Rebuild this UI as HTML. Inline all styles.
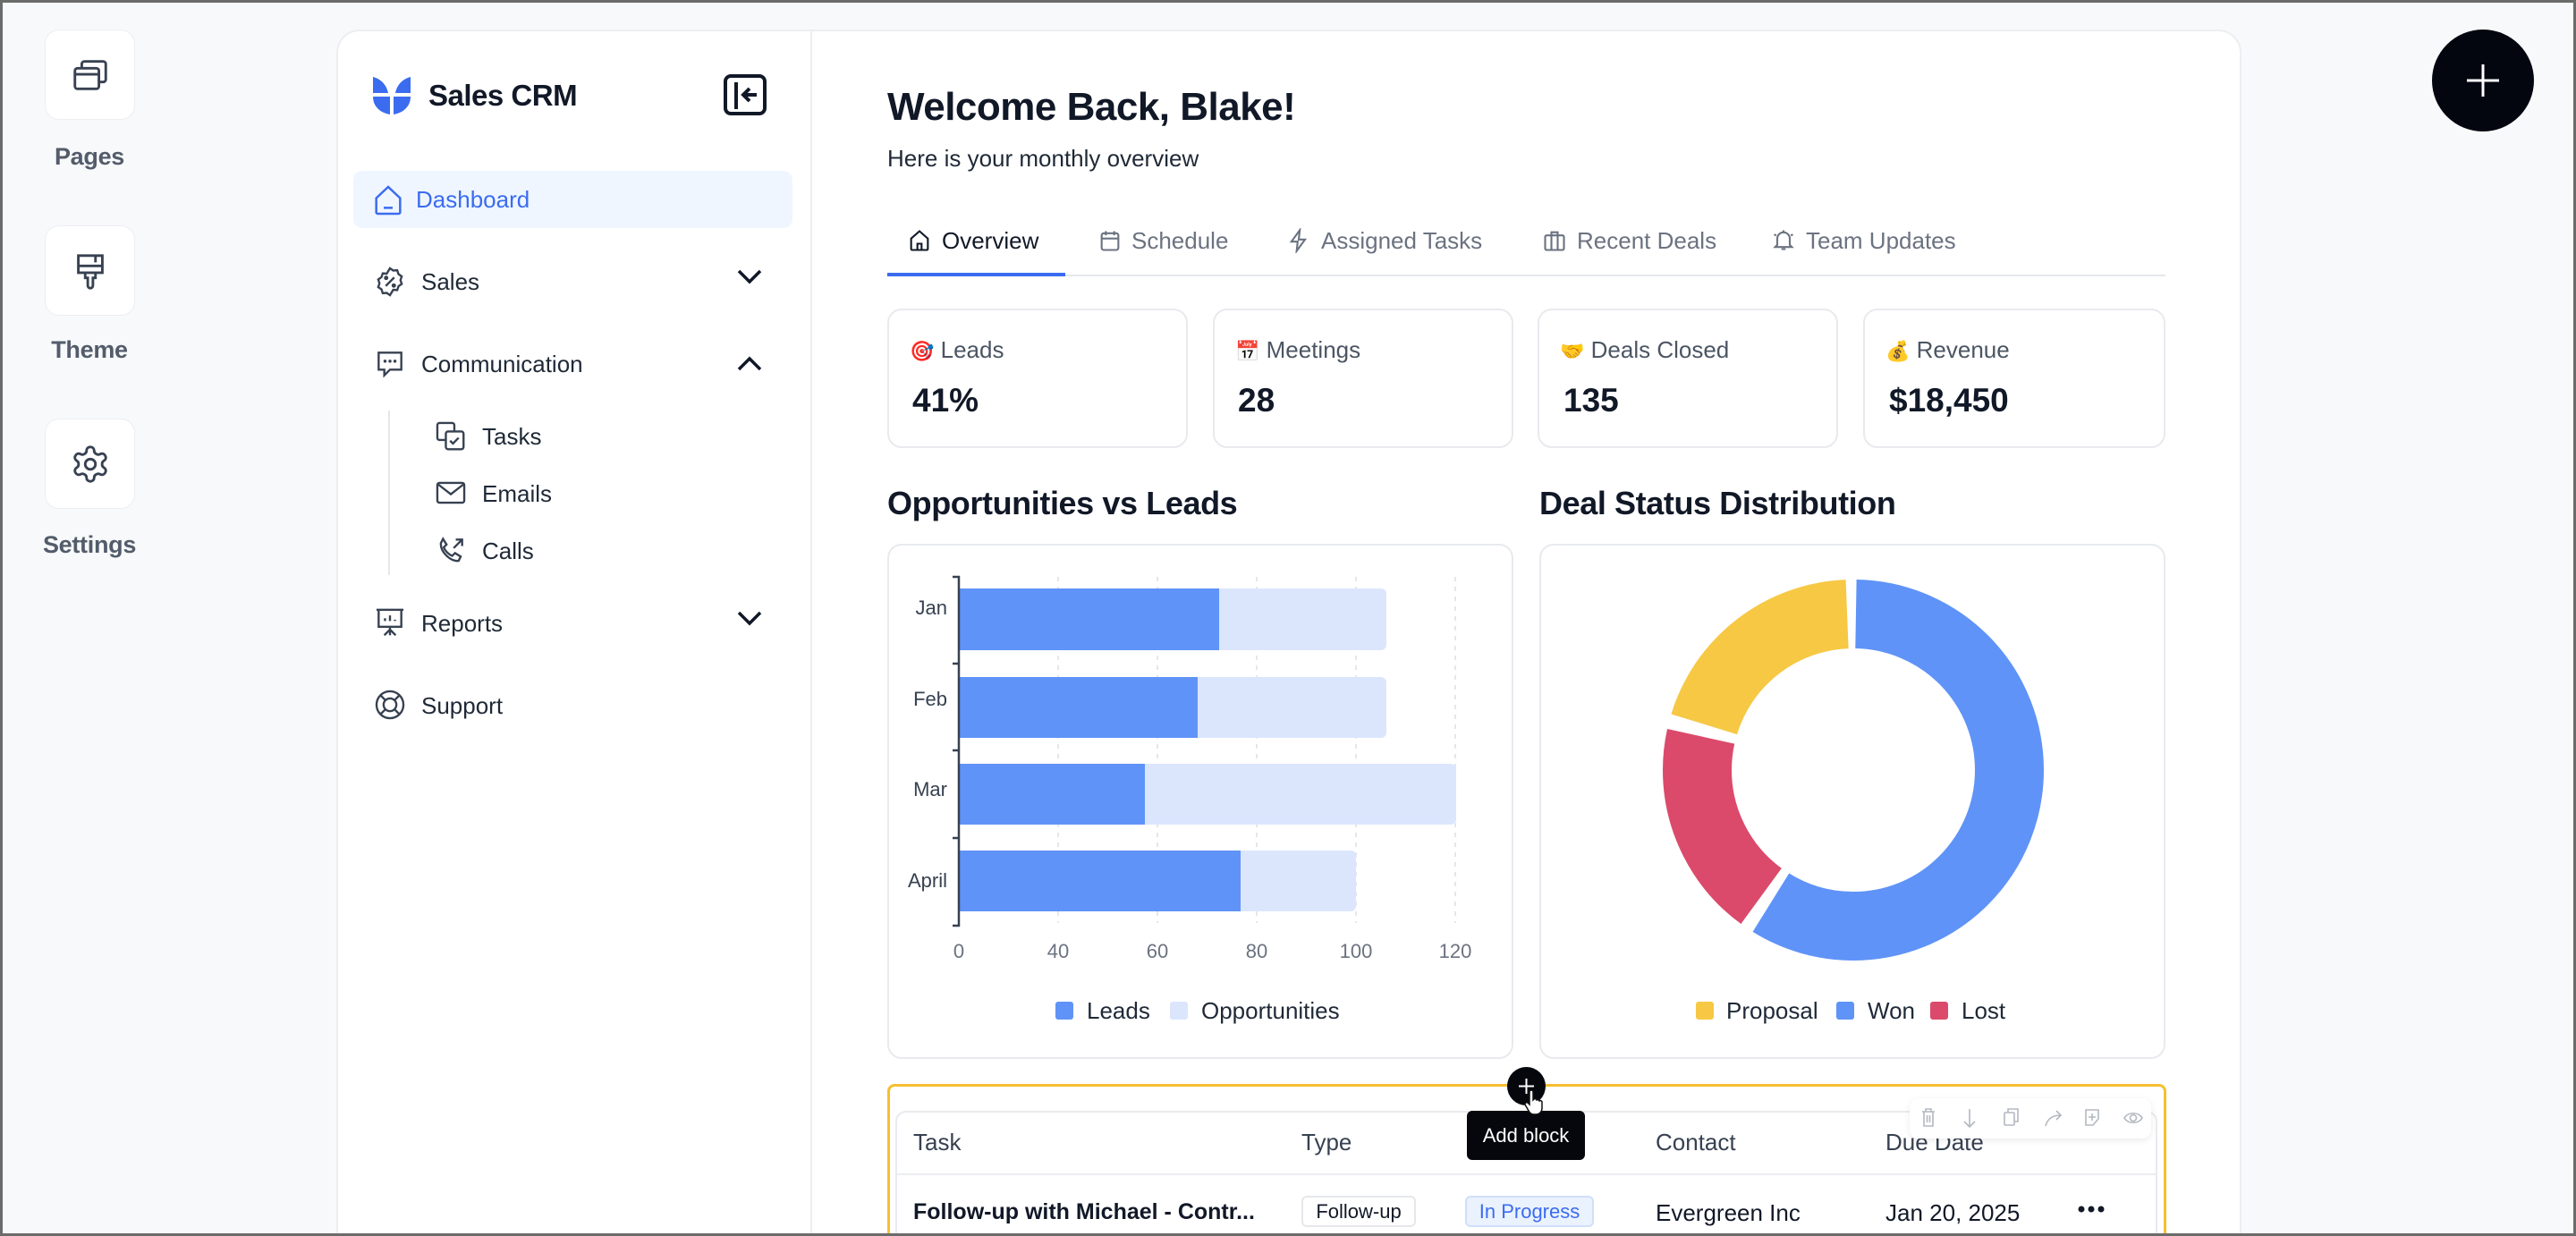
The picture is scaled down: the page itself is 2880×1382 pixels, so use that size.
<!DOCTYPE html>
<html><head><meta charset="utf-8">
<style>
*{box-sizing:border-box;margin:0;padding:0}
html,body{width:2880px;height:1382px;overflow:hidden}
body{background:#f8f9fb;font-family:"Liberation Sans",Arial,sans-serif;color:#111827;position:relative}
.frame{position:absolute;left:0;top:0;width:2880px;height:1382px;border:3px solid #6b6b6b;pointer-events:none;z-index:50}
.abs{position:absolute}
.rail{position:absolute;left:50px;width:101px;height:101px;background:#fff;border:1px solid #eceef1;border-radius:16px;display:flex;align-items:center;justify-content:center}
.raillbl{position:absolute;width:200px;left:0;text-align:center;font-size:27px;color:#374151;font-weight:bold;letter-spacing:-0.3px;opacity:.85}
.panel{position:absolute;left:376px;top:33px;width:2130px;height:1400px;background:#fff;border:2px solid #eceef1;border-radius:26px}
.divider{position:absolute;left:906px;top:35px;width:2px;height:1360px;background:#eceef1}
.menu{position:absolute;font-size:26px;color:#1f2937}
.ico{position:absolute}
.card{position:absolute;background:#fff;border:2px solid #e8eaee;border-radius:16px}
.lbl{position:absolute;font-size:26px;color:#4b5563}
.val{position:absolute;font-size:37px;font-weight:bold;color:#111827}
.tab{position:absolute;top:252px;font-size:26px;color:#6b7280}
</style></head><body>
<div class="frame"></div>

<!-- left rail -->
<div class="rail" style="top:33px"><svg width="46" height="46" viewBox="0 0 24 24" fill="none" stroke="#374151" stroke-width="1.5"><rect x="3" y="8" width="14" height="12" rx="1.5"/><path d="M7 8V5.5A1.5 1.5 0 0 1 8.5 4h11A1.5 1.5 0 0 1 21 5.5v9a1.5 1.5 0 0 1-1.5 1.5H17M3 11.5h14"/></svg></div>
<div class="raillbl" style="top:160px">Pages</div>
<div class="rail" style="top:252px"><svg width="46" height="46" viewBox="0 0 24 24" fill="none" stroke="#374151" stroke-width="1.5"><path d="M5 3h14v10H5zM5 9h14M15 3v4M9 13h6v3h-1.5v4.5a1.5 1.5 0 0 1-3 0V16H9z"/></svg></div>
<div class="raillbl" style="top:376px">Theme</div>
<div class="rail" style="top:468px"><svg width="46" height="46" viewBox="0 0 24 24" fill="none" stroke="#374151" stroke-width="1.5"><path d="M12.22 2h-.44a2 2 0 0 0-2 2v.18a2 2 0 0 1-1 1.73l-.43.25a2 2 0 0 1-2 0l-.15-.08a2 2 0 0 0-2.730.73l-.22.38a2 2 0 0 0 .73 2.73l.15.1a2 2 0 0 1 1 1.72v.51a2 2 0 0 1-1 1.74l-.15.09a2 2 0 0 0-.73 2.73l.22.38a2 2 0 0 0 2.73.73l.15-.08a2 2 0 0 1 2 0l.43.25a2 2 0 0 1 1 1.73V20a2 2 0 0 0 2 2h.44a2 2 0 0 0 2-2v-.18a2 2 0 0 1 1-1.73l.43-.25a2 2 0 0 1 2 0l.15.08a2 2 0 0 0 2.73-.73l.22-.39a2 2 0 0 0-.73-2.73l-.15-.08a2 2 0 0 1-1-1.74v-.5a2 2 0 0 1 1-1.74l.15-.09a2 2 0 0 0 .73-2.73l-.22-.38a2 2 0 0 0-2.73-.73l-.15.08a2 2 0 0 1-2 0l-.43-.25a2 2 0 0 1-1-1.73V4a2 2 0 0 0-2-2z"/><circle cx="12" cy="12" r="3"/></svg></div>
<div class="raillbl" style="top:594px">Settings</div>

<!-- FAB -->
<div class="abs" style="left:2719px;top:33px;width:114px;height:114px;border-radius:50%;background:#03060f"></div>
<svg class="abs" style="left:2740px;top:54px" width="72" height="72" viewBox="0 0 72 72"><path d="M36 18v36M18 36h36" stroke="#fff" stroke-width="3"/></svg>

<div class="panel"></div>
<div class="divider"></div>

<!-- sidebar -->
<svg class="abs" style="left:415px;top:84px" width="46" height="46" viewBox="0 0 46 46"><path d="M2 2c8 2 15 8 17 18H2z M44 2c-8 2-15 8-17 18h17z M2 24h19v20C10 42 2 35 2 24z M25 24h19c0 11-8 18-19 20z" fill="#3b6cf0"/></svg>
<div class="abs" style="left:479px;top:88px;font-size:33px;font-weight:bold;color:#111827;letter-spacing:-0.5px">Sales CRM</div>
<svg class="abs" style="left:808px;top:82px" width="52" height="50" viewBox="0 0 52 50"><rect x="3" y="3" width="44" height="42" rx="6" fill="none" stroke="#111827" stroke-width="4"/><path d="M15 10v30" stroke="#111827" stroke-width="4"/><path d="M38 24H24M30 17l-7 7 7 7" fill="none" stroke="#111827" stroke-width="4"/></svg>

<div class="abs" style="left:395px;top:191px;width:491px;height:64px;background:#eff6ff;border-radius:10px"></div>
<svg class="ico" style="left:414px;top:204px" width="40" height="40" viewBox="0 0 24 24" fill="none" stroke="#3b6cf0" stroke-width="1.5"><path d="M4 10.5L12 3l8 7.5V20a1 1 0 0 1-1 1H5a1 1 0 0 1-1-1z M9 17h6"/></svg>
<div class="menu" style="left:465px;top:208px;color:#3b6cf0">Dashboard</div>

<svg class="ico" style="left:417px;top:296px" width="38" height="38" viewBox="0 0 24 24" fill="none" stroke="#374151" stroke-width="1.5"><path d="M12 2.5l2.3 1.6 2.8-.2.9 2.7 2.3 1.6-.9 2.7.9 2.7-2.3 1.6-.9 2.7-2.8-.2L12 21.5l-2.3-1.6-2.8.2-.9-2.7-2.3-1.6.9-2.7-.9-2.7 2.3-1.6.9-2.7 2.8.2z M9 15l6-6"/><circle cx="9.3" cy="9.3" r=".8"/><circle cx="14.7" cy="14.7" r=".8"/></svg>
<div class="menu" style="left:471px;top:300px">Sales</div>
<svg class="ico" style="left:820px;top:296px" width="36" height="28" viewBox="0 0 36 28"><path d="M6 7l12 12L30 7" fill="none" stroke="#111827" stroke-width="3.5"/></svg>

<svg class="ico" style="left:417px;top:388px" width="38" height="38" viewBox="0 0 24 24" fill="none" stroke="#374151" stroke-width="1.5"><path d="M4 4h16v12H12l-4 4v-4H4z"/><path d="M8.5 10h.01M12 10h.01M15.5 10h.01" stroke-width="2.2" stroke-linecap="round"/></svg>
<div class="menu" style="left:471px;top:392px">Communication</div>
<svg class="ico" style="left:820px;top:392px" width="36" height="28" viewBox="0 0 36 28"><path d="M6 21L18 9l12 12" fill="none" stroke="#111827" stroke-width="3.5"/></svg>

<div class="abs" style="left:434px;top:459px;width:2px;height:184px;background:#e5e7eb"></div>
<svg class="ico" style="left:485px;top:468px" width="38" height="40" viewBox="0 0 24 24" fill="none" stroke="#374151" stroke-width="1.5"><rect x="2.5" y="2.5" width="12" height="12" rx="1.5"/><rect x="8.5" y="8.5" width="12.5" height="12.5" rx="1.5" fill="#fff"/><path d="M11.5 15l2 2 4-4"/></svg>
<div class="menu" style="left:539px;top:473px">Tasks</div>
<svg class="ico" style="left:485px;top:532px" width="38" height="38" viewBox="0 0 24 24" fill="none" stroke="#374151" stroke-width="1.5"><rect x="2.5" y="5" width="19" height="14" rx="1.5"/><path d="M3 6l9 7 9-7"/></svg>
<div class="menu" style="left:539px;top:537px">Emails</div>
<svg class="ico" style="left:485px;top:596px" width="38" height="40" viewBox="0 0 24 24" fill="none" stroke="#374151" stroke-width="1.5"><path d="M6.5 3.5l2.5 4-2 2c1 2.5 3.5 5 6 6l2-2 4 2.5-1.5 3c-6 .5-13-6.5-12.5-12.5z M14 10l6-6M15.5 4H20v4.5"/></svg>
<div class="menu" style="left:539px;top:601px">Calls</div>

<svg class="ico" style="left:417px;top:677px" width="38" height="38" viewBox="0 0 24 24" fill="none" stroke="#374151" stroke-width="1.5"><path d="M2.5 3h19M4 3v12h16V3M12 15v2M8 21l4-4 4 4M12 17v4M8.5 11V9M12 11V7M15.5 11v-1"/></svg>
<div class="menu" style="left:471px;top:682px">Reports</div>
<svg class="ico" style="left:820px;top:678px" width="36" height="28" viewBox="0 0 36 28"><path d="M6 7l12 12L30 7" fill="none" stroke="#111827" stroke-width="3.5"/></svg>

<svg class="ico" style="left:417px;top:769px" width="38" height="38" viewBox="0 0 24 24" fill="none" stroke="#374151" stroke-width="1.5"><circle cx="12" cy="12" r="9.5"/><circle cx="12" cy="12" r="4.5"/><path d="M5.3 5.3l3.5 3.5M15.2 15.2l3.5 3.5M18.7 5.3l-3.5 3.5M8.8 15.2l-3.5 3.5"/></svg>
<div class="menu" style="left:471px;top:774px">Support</div>

<!-- header -->
<div class="abs" style="left:992px;top:95px;font-size:44px;font-weight:bold;color:#111827;letter-spacing:-0.5px">Welcome Back, Blake!</div>
<div class="abs" style="left:992px;top:162px;font-size:26px;color:#1f2937">Here is your monthly overview</div>

<!-- tabs -->
<div class="abs" style="left:992px;top:307px;width:1429px;height:2px;background:#e5e7eb"></div>
<div class="abs" style="left:992px;top:305px;width:199px;height:4px;background:#3b6cf0"></div>
<svg class="ico" style="left:1014px;top:255px" width="28" height="28" viewBox="0 0 24 24" fill="none" stroke="#111827" stroke-width="1.8"><path d="M4 10L12 3l8 7v10a1 1 0 0 1-1 1H5a1 1 0 0 1-1-1z M10 21v-6h4v6"/></svg>
<div class="tab" style="left:1053px;top:254px;color:#111827">Overview</div>
<svg class="ico" style="left:1227px;top:255px" width="28" height="28" viewBox="0 0 24 24" fill="none" stroke="#6b7280" stroke-width="1.8"><rect x="4" y="5" width="16" height="16" rx="2"/><path d="M4 10h16M8 3v4M16 3v4"/></svg>
<div class="tab" style="left:1265px;top:254px">Schedule</div>
<svg class="ico" style="left:1438px;top:255px" width="28" height="28" viewBox="0 0 24 24" fill="none" stroke="#6b7280" stroke-width="1.8"><path d="M13 2L5 13h6l-1 9 8-11h-6z"/></svg>
<div class="tab" style="left:1477px;top:254px">Assigned Tasks</div>
<svg class="ico" style="left:1724px;top:255px" width="28" height="28" viewBox="0 0 24 24" fill="none" stroke="#6b7280" stroke-width="1.8"><rect x="3" y="7" width="18" height="14" rx="1.5"/><path d="M9 7V4h6v3M9 7v14M15 7v14"/></svg>
<div class="tab" style="left:1763px;top:254px">Recent Deals</div>
<svg class="ico" style="left:1980px;top:253px" width="28" height="30" viewBox="0 0 24 24" fill="none" stroke="#6b7280" stroke-width="1.8"><path d="M6 17V11a6 6 0 0 1 12 0v6l2 2H4z M10 21h4M12 3v2M3 7l2 1M21 7l-2 1"/></svg>
<div class="tab" style="left:2019px;top:254px">Team Updates</div>

<!-- stat cards -->
<div class="card" style="left:992px;top:345px;width:336px;height:156px"></div>
<div class="card" style="left:1356px;top:345px;width:336px;height:156px"></div>
<div class="card" style="left:1719px;top:345px;width:336px;height:156px"></div>
<div class="card" style="left:2083px;top:345px;width:338px;height:156px"></div>
<div class="lbl" style="left:1017px;top:376px"><span style="font-size:22px">🎯</span> Leads</div>
<div class="val" style="left:1020px;top:427px">41%</div>
<div class="lbl" style="left:1381px;top:376px"><span style="font-size:22px">📅</span> Meetings</div>
<div class="val" style="left:1384px;top:427px">28</div>
<div class="lbl" style="left:1744px;top:376px"><span style="font-size:22px">🤝</span> Deals Closed</div>
<div class="val" style="left:1748px;top:427px">135</div>
<div class="lbl" style="left:2108px;top:376px"><span style="font-size:22px">💰</span> Revenue</div>
<div class="val" style="left:2112px;top:427px">$18,450</div>

<!-- section titles -->
<div class="abs" style="left:992px;top:542px;font-size:36px;font-weight:bold;color:#111827;letter-spacing:-0.4px">Opportunities vs Leads</div>
<div class="abs" style="left:1721px;top:542px;font-size:36px;font-weight:bold;color:#111827;letter-spacing:-0.4px">Deal Status Distribution</div>

<!-- chart cards -->
<div class="card" style="left:992px;top:608px;width:700px;height:576px"></div>
<div class="card" style="left:1721px;top:608px;width:700px;height:576px"></div>

<svg class="abs" style="left:992px;top:608px" width="700" height="576" viewBox="992 608 700 576" font-family="Liberation Sans, Arial, sans-serif">
  <g stroke="#e5e7eb" stroke-width="2" stroke-dasharray="5 6">
    <line x1="1183" y1="645" x2="1183" y2="1032"/><line x1="1294" y1="645" x2="1294" y2="1032"/><line x1="1405" y1="645" x2="1405" y2="1032"/><line x1="1516" y1="645" x2="1516" y2="1032"/><line x1="1627" y1="645" x2="1627" y2="1032"/>
  </g>
  <rect x="1072" y="658" width="478" height="69" rx="6" fill="#dbe6fd"/>
  <rect x="1072" y="658" width="291" height="69" fill="#5f93f7"/>
  <rect x="1072" y="757" width="478" height="68" rx="6" fill="#dbe6fd"/>
  <rect x="1072" y="757" width="267" height="68" fill="#5f93f7"/>
  <rect x="1072" y="854" width="556" height="68" rx="6" fill="#dbe6fd"/>
  <rect x="1072" y="854" width="208" height="68" fill="#5f93f7"/>
  <rect x="1072" y="951" width="444" height="68" rx="6" fill="#dbe6fd"/>
  <rect x="1072" y="951" width="315" height="68" fill="#5f93f7"/>
  <path d="M1065 645h7v390h-7M1065 742h7M1065 839h7M1065 937h7" fill="none" stroke="#374151" stroke-width="2.5"/>
  <g font-size="22" fill="#374151" text-anchor="end">
    <text x="1059" y="687">Jan</text><text x="1059" y="789">Feb</text><text x="1059" y="890">Mar</text><text x="1059" y="992">April</text>
  </g>
  <g font-size="22" fill="#6b7280" text-anchor="middle">
    <text x="1072" y="1071">0</text><text x="1183" y="1071">40</text><text x="1294" y="1071">60</text><text x="1405" y="1071">80</text><text x="1516" y="1071">100</text><text x="1627" y="1071">120</text>
  </g>
  <rect x="1180" y="1120" width="20" height="20" rx="3" fill="#5f93f7"/>
  <text x="1215" y="1139" font-size="26" fill="#1f2937">Leads</text>
  <rect x="1308" y="1120" width="20" height="20" rx="3" fill="#dbe6fd"/>
  <text x="1343" y="1139" font-size="26" fill="#1f2937">Opportunities</text>
</svg>

<svg class="abs" style="left:1721px;top:608px" width="700" height="576" viewBox="1721 608 700 576" font-family="Liberation Sans, Arial, sans-serif">
  <g transform="rotate(-90 2072 861)" fill="none" stroke-width="77">
    <circle cx="2072" cy="861" r="174.5" stroke="#5f93f7" stroke-dasharray="642 2000" stroke-dashoffset="-3"/>
    <circle cx="2072" cy="861" r="174.5" stroke="#db4a6b" stroke-dasharray="202 2000" stroke-dashoffset="-658"/>
    <circle cx="2072" cy="861" r="174.5" stroke="#f6c844" stroke-dasharray="215 2000" stroke-dashoffset="-874"/>
  </g>
  <rect x="1896" y="1120" width="20" height="20" rx="3" fill="#f6c844"/>
  <text x="1930" y="1139" font-size="26" fill="#1f2937">Proposal</text>
  <rect x="2053" y="1120" width="20" height="20" rx="3" fill="#5f93f7"/>
  <text x="2088" y="1139" font-size="26" fill="#1f2937">Won</text>
  <rect x="2158" y="1120" width="20" height="20" rx="3" fill="#db4a6b"/>
  <text x="2193" y="1139" font-size="26" fill="#1f2937">Lost</text>
</svg>

<!-- table block -->
<div class="abs" style="left:992px;top:1212px;width:1430px;height:200px;border:3px solid #f5c02f;border-radius:8px"></div>
<div class="abs" style="left:1001px;top:1242px;width:1411px;height:200px;border:2px solid #e8eaee;border-radius:12px;background:#fff"></div>
<div class="abs" style="left:1003px;top:1312px;width:1407px;height:2px;background:#eceef1"></div>
<div class="abs" style="left:1021px;top:1262px;font-size:26px;color:#374151">Task</div>
<div class="abs" style="left:1455px;top:1262px;font-size:26px;color:#374151">Type</div>
<div class="abs" style="left:1851px;top:1262px;font-size:26px;color:#374151">Contact</div>
<div class="abs" style="left:2108px;top:1262px;font-size:26px;color:#374151">Due Date</div>
<div class="abs" style="left:1021px;top:1341px;font-size:25px;font-weight:bold;color:#111827">Follow-up with Michael - Contr...</div>
<div class="abs" style="left:1455px;top:1337px;width:128px;height:35px;border:2px solid #e5e7eb;border-radius:6px;font-size:22px;color:#111827;text-align:center;line-height:31px">Follow-up</div>
<div class="abs" style="left:1638px;top:1337px;width:144px;height:35px;border:2px solid #cfe0fb;background:#eaf2fe;border-radius:6px;font-size:22px;color:#3b6cf0;text-align:center;line-height:31px">In Progress</div>
<div class="abs" style="left:1851px;top:1341px;font-size:26px;color:#111827">Evergreen Inc</div>
<div class="abs" style="left:2108px;top:1341px;font-size:26px;color:#111827">Jan 20, 2025</div>
<svg class="abs" style="left:2322px;top:1345px" width="34" height="14"><circle cx="5" cy="7" r="3.5" fill="#111827"/><circle cx="16" cy="7" r="3.5" fill="#111827"/><circle cx="27" cy="7" r="3.5" fill="#111827"/></svg>

<!-- floating toolbar -->
<div class="abs" style="left:2135px;top:1228px;width:270px;height:45px;background:#fff;border-radius:10px;box-shadow:0 2px 8px rgba(0,0,0,.08)"></div>
<svg class="abs" style="left:2135px;top:1228px" width="270" height="45" viewBox="0 0 270 45" fill="none" stroke="#b3b8c0" stroke-width="1.6">
  <path d="M14 15h14M18 15v-3h6v3M16 15v16h10V15M19.5 19v8M22.5 19v8"/>
  <path d="M67 12v20M61 26l6 6 6-6"/>
  <rect x="106" y="16" width="11" height="14" rx="1"/><path d="M110 16v-4h11v14h-4"/>
  <path d="M152 31c2-8 8-12 17-12M164 14l5 5-5 5"/>
  <path d="M197 13h14v10l-6 7h-8z M204 17v8M200 21h8"/>
  <path d="M240 22c4-7 16-7 20 0-4 7-16 7-20 0z"/><circle cx="250" cy="22" r="3.5"/>
</svg>

<!-- add block -->
<div class="abs" style="left:1640px;top:1242px;width:132px;height:55px;background:#05070d;border-radius:6px;color:#fff;font-size:22px;text-align:center;line-height:55px">Add block</div>
<div class="abs" style="left:1685px;top:1193px;width:43px;height:43px;border-radius:50%;background:#05070d"></div>
<svg class="abs" style="left:1685px;top:1193px" width="43" height="43"><path d="M21.5 13v17M13 21.5h17" stroke="#fff" stroke-width="2"/></svg>
<svg class="abs" style="left:1704px;top:1218px" width="24" height="30" viewBox="0 0 24 30"><path d="M6 3a2 2 0 0 1 4 0v9l1-1a2 2 0 0 1 3 1 2 2 0 0 1 3 1 2 2 0 0 1 3 1v7c0 4-3 7-7 7h-2c-3 0-5-2-6-4l-4-7a2 2 0 0 1 3-2l2 2z" fill="#fff" stroke="#111" stroke-width="1.5"/></svg>
</body></html>
